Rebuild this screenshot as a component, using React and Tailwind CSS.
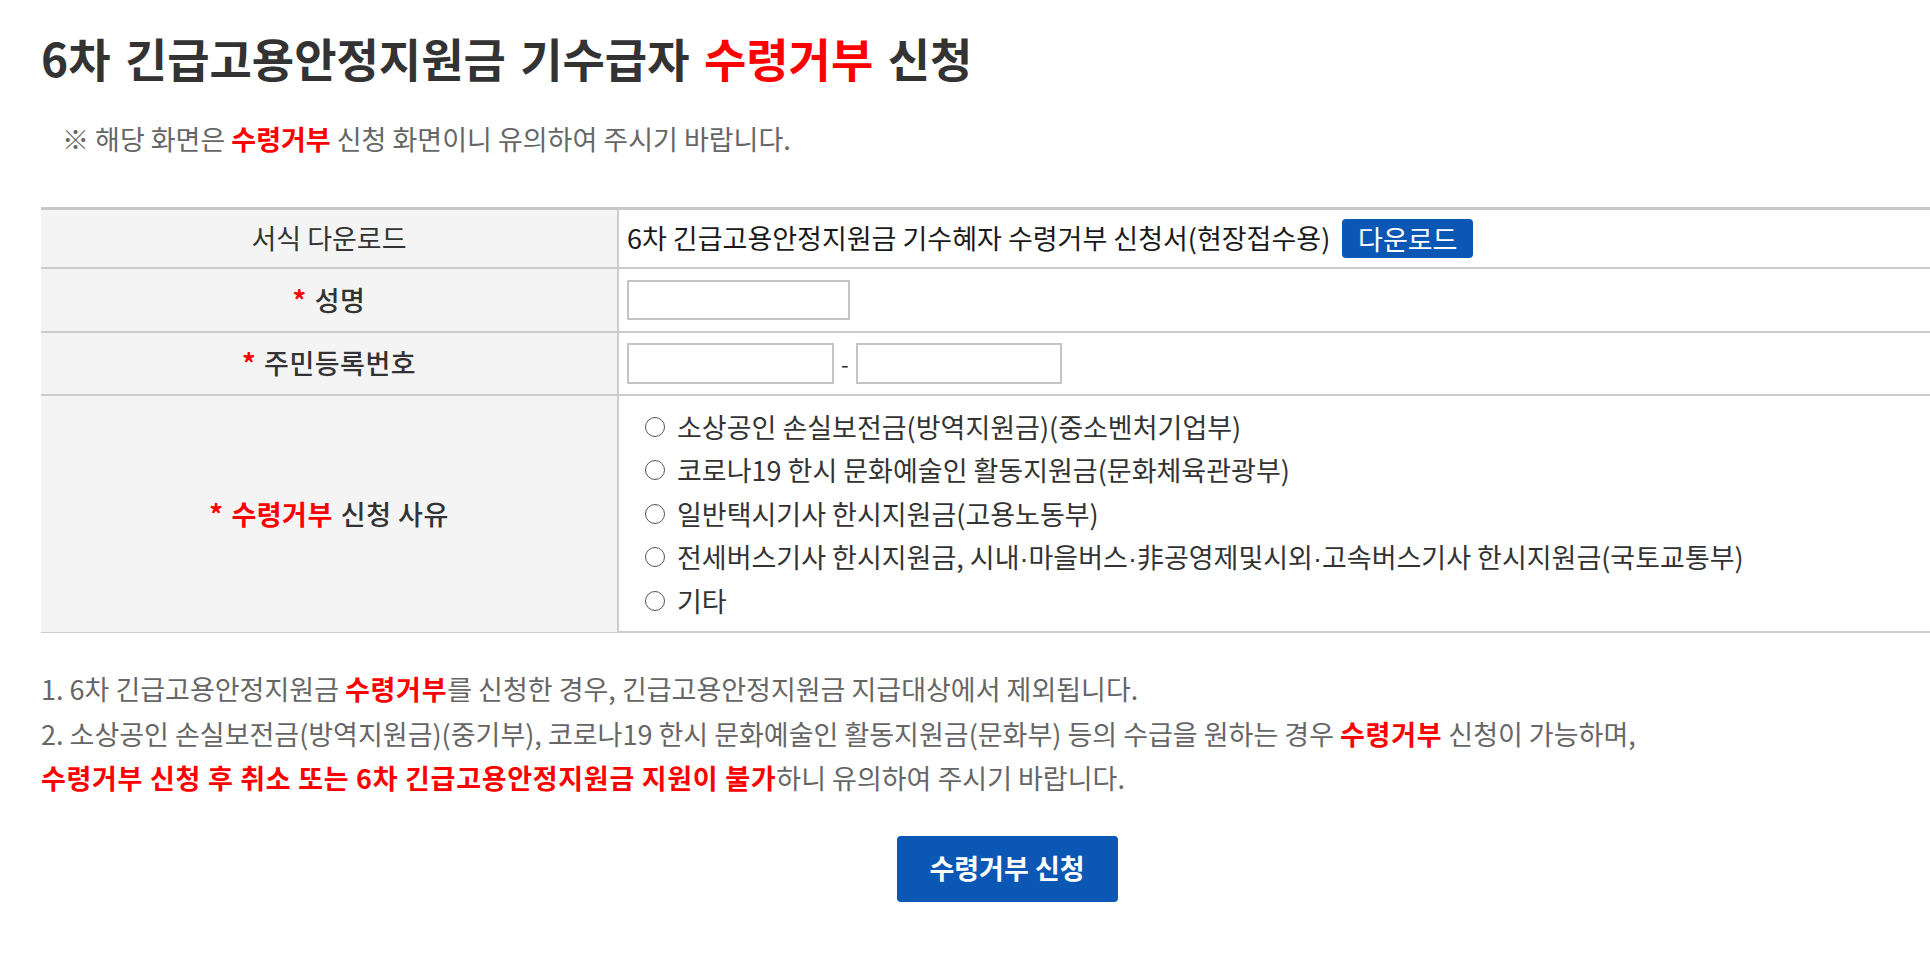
import React from "react";

const RED = "text-[#ff0000]";
const BOLD_RED = "text-[#ff0000] font-bold tracking-[0.7px]";

const Dot = () => <span className="font-['Liberation_Sans'] leading-none">·</span>;

const reasons = [
  "소상공인 손실보전금(방역지원금)(중소벤처기업부)",
  "코로나19 한시 문화예술인 활동지원금(문화체육관광부)",
  "일반택시기사 한시지원금(고용노동부)",
  <>
    전세버스기사 한시지원금, 시내<Dot />마을버스<Dot />非공영제및시외<Dot />고속버스기사 한시지원금(국토교통부)
  </>,
  "기타",
];

const Star = () => <span className={`${RED} font-bold mr-[8px]`}>*</span>;

const App = () => {
  return (
    <div
      className="w-[1930px] min-h-[955px] overflow-hidden bg-white text-[#333]"
      style={{ fontFamily: '"Noto Sans CJK KR", "Noto Sans", sans-serif' }}
    >
      <div className="w-[1932px] ml-[41px] pt-[28px]">
        <h1 className="text-[46px] leading-[58px] font-bold text-[#333] [word-spacing:4px]">
          6차 긴급고용안정지원금 기수급자 <span className={RED}>수령거부</span> 신청
        </h1>
        <p className="mt-[37px] ml-[21px] text-[27px] leading-[32px] text-[#666]">
          ※ 해당 화면은 <span className={`${RED} font-bold`}>수령거부</span> 신청 화면이니 유의하여 주시기 바랍니다.
        </p>

        <div className="mt-[52px] border-t-[3px] border-[#c8c8c8] text-[27px]">
          <div className="grid grid-cols-[578px_1fr] h-[59px] border-b-2 border-[#cccccc]">
            <div className="bg-[#f4f4f4] border-r-2 border-[#cccccc] flex items-center justify-center">
              서식 다운로드
            </div>
            <div className="flex items-center pl-[8px] text-[#1a1a1a]">
              6차 긴급고용안정지원금 기수혜자 수령거부 신청서(현장접수용)
              <button className="ml-[12px] w-[131px] h-[39px] rounded-[4px] bg-[#0b57b4] text-white text-[27px] leading-none">
                다운로드
              </button>
            </div>
          </div>

          <div className="grid grid-cols-[578px_1fr] h-[64px] border-b-2 border-[#cccccc]">
            <div className="bg-[#f4f4f4] border-r-2 border-[#cccccc] flex items-center justify-center font-medium tracking-[0.5px]">
              <Star />
              성명
            </div>
            <div className="flex items-center pl-[8px]">
              <input className="w-[223px] h-[40px] border-2 border-[#c4c4c4] bg-white outline-none" />
            </div>
          </div>

          <div className="grid grid-cols-[578px_1fr] h-[63px] border-b-2 border-[#cccccc]">
            <div className="bg-[#f4f4f4] border-r-2 border-[#cccccc] flex items-center justify-center font-medium tracking-[0.5px]">
              <Star />
              주민등록번호
            </div>
            <div className="flex items-center pl-[8px] gap-[7px]">
              <input className="w-[207px] h-[41px] border-2 border-[#c4c4c4] bg-white outline-none" />
              <span className="text-[22px]">-</span>
              <input className="w-[206px] h-[41px] border-2 border-[#c4c4c4] bg-white outline-none" />
            </div>
          </div>

          <div className="grid grid-cols-[578px_1fr] h-[237px] border-b-2 border-[#cccccc]">
            <div className="bg-[#f4f4f4] border-r-2 border-[#cccccc] flex items-center justify-center font-medium tracking-[0.5px]">
              <Star />
              <span className={`${RED} font-bold mr-[8px]`}>수령거부</span>
              신청 사유
            </div>
            <ul className="pl-[26px] py-[9px]">
              {reasons.map((r, i) => (
                <li key={i} className="flex items-center gap-[12px] h-[43.5px]">
                  <span className="inline-block w-[20px] h-[20px] rounded-full border-[1.5px] border-[#555]" />
                  <span className="leading-[32px]">{r}</span>
                </li>
              ))}
            </ul>
          </div>
        </div>

        <div className="mt-[34px] text-[27px] leading-[44.5px] text-[#666]">
          <p>
            1. 6차 긴급고용안정지원금 <span className={BOLD_RED}>수령거부</span>를 신청한 경우, 긴급고용안정지원금
            지급대상에서 제외됩니다.
          </p>
          <p>
            2. 소상공인 손실보전금(방역지원금)(중기부), 코로나19 한시 문화예술인 활동지원금(문화부) 등의 수급을 원하는 경우{" "}
            <span className={BOLD_RED}>수령거부</span> 신청이 가능하며,
          </p>
          <p>
            <span className={BOLD_RED}>수령거부 신청 후 취소 또는 6차 긴급고용안정지원금 지원이 불가</span>하니
            유의하여 주시기 바랍니다.
          </p>
        </div>

        <div className="flex justify-center mt-[35px]">
          <button className="w-[221px] h-[66px] rounded-[4px] bg-[#0b57b4] text-white text-[27px] font-bold">
            수령거부 신청
          </button>
        </div>
      </div>
    </div>
  );
};

export default App;
